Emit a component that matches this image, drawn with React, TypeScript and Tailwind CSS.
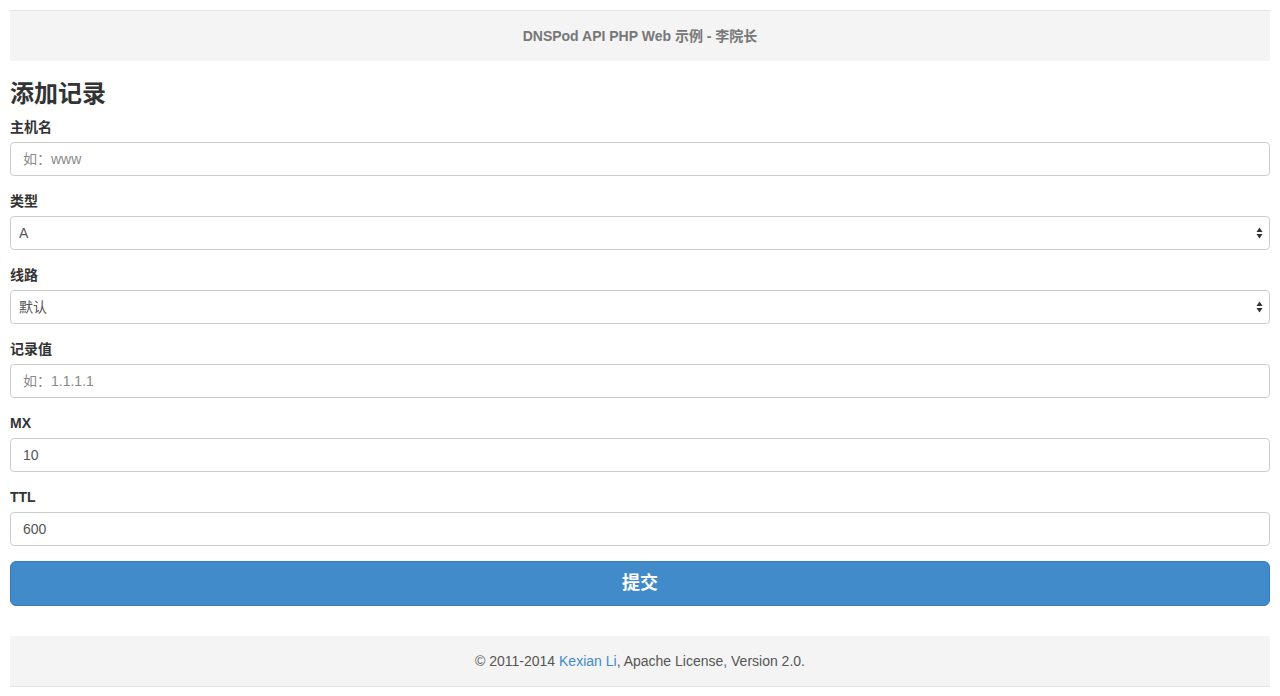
import React from "react";

const font = { fontFamily: '"Liberation Sans", "Noto Sans CJK SC", sans-serif' };

function Arrows() {
  return (
    <svg
      className="pointer-events-none absolute right-[7px] top-1/2 -translate-y-1/2"
      width="7"
      height="12"
      viewBox="0 0 7 12"
    >
      <path d="M3.5 0.5 L6.5 5 L0.5 5 Z" fill="#333" />
      <path d="M3.5 11.5 L6.5 7 L0.5 7 Z" fill="#333" />
    </svg>
  );
}

function Group({ label, children }: { label: string; children: React.ReactNode }) {
  return (
    <div className="mb-[15px]">
      <label className="mb-[5px] block text-[14px] font-bold leading-[20px] text-[#333]">{label}</label>
      {children}
    </div>
  );
}

function Input({ placeholder, value }: { placeholder?: string; value?: string }) {
  return (
    <input
      className="block h-[34px] w-full rounded-[4px] border border-[#ccc] bg-white px-[12px] text-[14px] text-[#555] outline-none placeholder:text-[#8a8a8a]"
      style={font}
      placeholder={placeholder}
      defaultValue={value}
    />
  );
}

function Select({ value }: { value: string }) {
  return (
    <div className="relative">
      <select
        className="block h-[34px] w-full appearance-none rounded-[4px] border border-[#ccc] bg-white pl-[8px] pr-[20px] text-[14px] text-[#555] outline-none"
        style={font}
        defaultValue={value}
      >
        <option value={value}>{value}</option>
      </select>
      <Arrows />
    </div>
  );
}

export default function App() {
  return (
    <div className="min-h-[696px] bg-white px-[10px] pt-[10px] text-[#333]" style={font}>
      <div className="flex h-[51px] items-center justify-center border-t border-[#e5e5e5] bg-[#f4f4f4] text-[14px] font-bold text-[#777]">
        DNSPod API PHP Web 示例 - 李院长
      </div>
      <h3 className="mb-[10px] mt-[20px] text-[24px] font-semibold leading-[26px] text-[#333]">添加记录</h3>
      <form onSubmit={(e) => e.preventDefault()}>
        <Group label="主机名">
          <Input placeholder="如：www" />
        </Group>
        <Group label="类型">
          <Select value="A" />
        </Group>
        <Group label="线路">
          <Select value="默认" />
        </Group>
        <Group label="记录值">
          <Input placeholder="如：1.1.1.1" />
        </Group>
        <Group label="MX">
          <Input value="10" />
        </Group>
        <Group label="TTL">
          <Input value="600" />
        </Group>
        <button
          type="submit"
          className="mt-[1px] flex h-[45px] w-full items-center justify-center rounded-[6px] border border-[#357ebd] bg-[#428bca] text-[18px] font-bold text-white"
          style={font}
        >
          提交
        </button>
      </form>
      <div className="mt-[30px] flex h-[51px] items-center justify-center border-b border-[#e5e5e5] bg-[#f4f4f4] text-[14px] text-[#555]">
        © 2011-2014&nbsp;<a className="text-[#428bca]" href="#">Kexian Li</a>, Apache License, Version 2.0.
      </div>
    </div>
  );
}
